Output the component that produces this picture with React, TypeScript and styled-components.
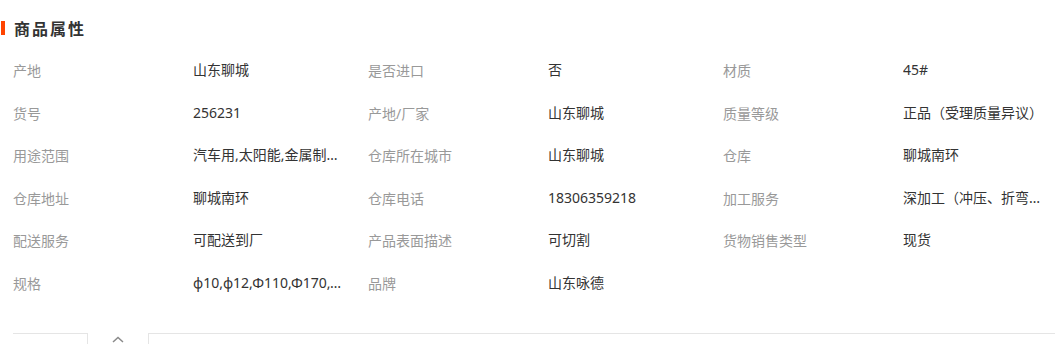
import React from "react";
import styled, { createGlobalStyle } from "styled-components";

const GlobalStyle = createGlobalStyle`
  html, body {
    margin: 0;
    padding: 0;
    background: #ffffff;
    overflow: hidden;
  }
  body {
    font-family: "Noto Sans", "Noto Sans CJK SC", sans-serif;
  }
`;

const Wrapper = styled.div`
  width: 1055px;
  height: 344px;
  overflow: hidden;
  display: flex;
  flex-flow: column;

  & > * {
    flex-shrink: 0;
  }
`;

const Title = styled.h3`
  margin: 7px 0 0;
  padding: 0 0 0 14px;
  height: 42px;
  display: flex;
  align-items: center;
  position: relative;
  font-family: "Noto Sans CJK SC", sans-serif;
  font-size: 16px;
  font-weight: 700;
  color: #333;
  letter-spacing: 2px;

  &::before {
    content: "";
    position: absolute;
    left: 1px;
    top: 14px;
    width: 4px;
    height: 14px;
    background: #ff4400;
  }
`;

const Grid = styled.div`
  display: grid;
  grid-template-columns: repeat(3, 180px 175px);
  grid-auto-rows: 42.5px;
  padding-left: 13px;
  width: 1078px;
`;

const Label = styled.span`
  display: flex;
  align-items: center;
  font-size: 14px;
  color: #999;
  white-space: nowrap;
`;

const Value = styled.span`
  display: block;
  align-self: center;
  max-width: 150px;
  font-size: 14px;
  line-height: 20px;
  color: #333;
  white-space: nowrap;
  overflow: hidden;
  text-overflow: ellipsis;
`;

const Footer = styled.div`
  margin-top: 29px;
  display: flex;
  align-items: flex-start;
  padding-left: 13px;
`;

const Line = styled.div<{ $grow?: boolean }>`
  border-top: 1px solid #e5e5e5;
  height: 0;
  width: ${(p) => (p.$grow ? "auto" : "74px")};
  flex: ${(p) => (p.$grow ? "1" : "none")};
`;

const Toggle = styled.button`
  width: 62px;
  height: 24px;
  margin: 0;
  padding: 0;
  background: #fff;
  border: 1px solid #e5e5e5;
  border-top: none;
  display: flex;
  justify-content: center;
  padding-top: 3px;
  cursor: pointer;
`;

const props: [string, string][] = [
  ["产地", "山东聊城"],
  ["是否进口", "否"],
  ["材质", "45#"],
  ["货号", "256231"],
  ["产地/厂家", "山东聊城"],
  ["质量等级", "正品（受理质量异议）"],
  ["用途范围", "汽车用,太阳能,金属制品,机械配件"],
  ["仓库所在城市", "山东聊城"],
  ["仓库", "聊城南环"],
  ["仓库地址", "聊城南环"],
  ["仓库电话", "18306359218"],
  ["加工服务", "深加工（冲压、折弯、焊接）"],
  ["配送服务", "可配送到厂"],
  ["产品表面描述", "可切割"],
  ["货物销售类型", "现货"],
  ["规格", "φ10,φ12,Φ110,Φ170,Φ200"],
  ["品牌", "山东咏德"],
];

export default function App() {
  return (
    <Wrapper>
      <GlobalStyle />
      <Title>商品属性</Title>
      <Grid>
        {props.map(([k, v]) => (
          <React.Fragment key={k}>
            <Label>{k}</Label>
            <Value title={v}>{v}</Value>
          </React.Fragment>
        ))}
      </Grid>
      <Footer>
        <Line />
        <Toggle aria-label="收起">
          <svg width="12" height="7" viewBox="0 0 12 7">
            <path d="M1 6 L6 1.5 L11 6" fill="none" stroke="#8a8a8a" strokeWidth="1.5" />
          </svg>
        </Toggle>
        <Line $grow />
      </Footer>
    </Wrapper>
  );
}
